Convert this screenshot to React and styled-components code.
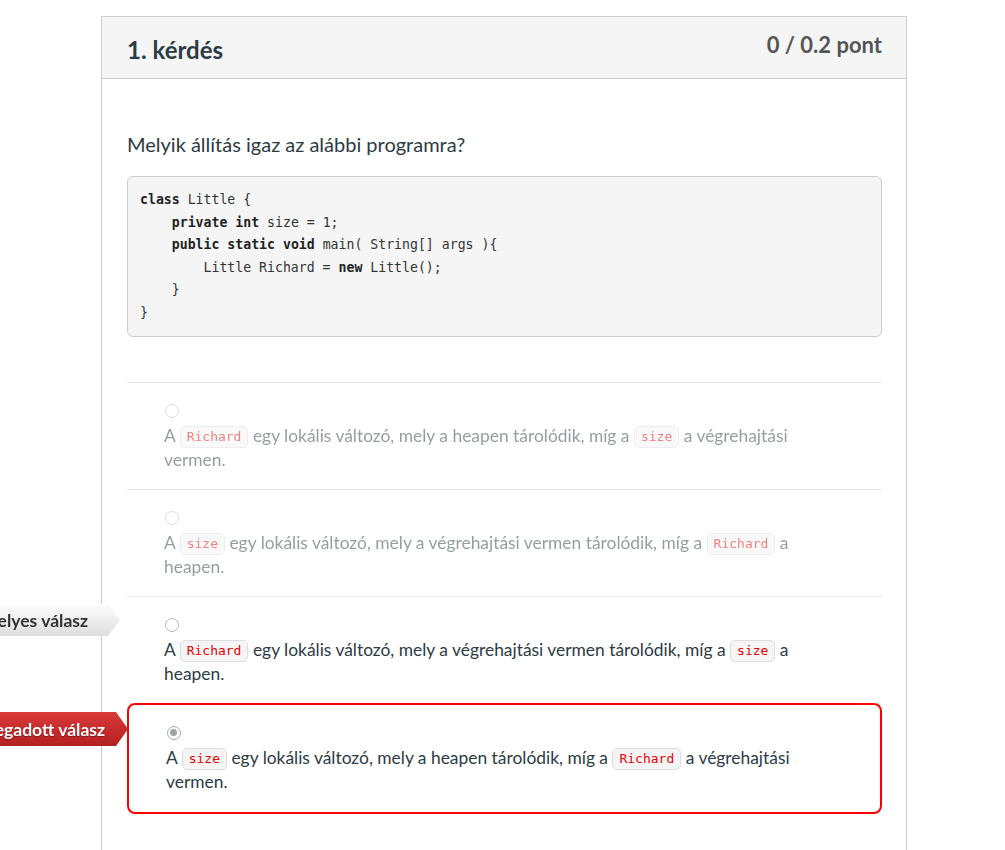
import React from "react";
import styled, { createGlobalStyle } from "styled-components";

const Global = createGlobalStyle`
  html, body { margin: 0; padding: 0; background: #fff; }
  body { font-family: Lato, "Open Sans", sans-serif; color: #2d3b45; overflow: hidden; }
`;

const Page = styled.div`
  padding: 16px 0 0 101px;
  height: 834px;
  overflow: hidden;
`;

const Card = styled.div`
  width: 804px;
  border: 1px solid #c7cdd1;
  border-bottom: none;
  min-height: 900px;
`;

const Header = styled.div`
  display: flex;
  justify-content: space-between;
  align-items: flex-start;
  height: 62px;
  box-sizing: border-box;
  padding: 15px 24px 0 25px;
  background: #f5f5f5;
  border-bottom: 1px solid #c7cdd1;
`;

const Title = styled.h2`
  margin: 3px 0 0;
  font-size: 24px;
  line-height: 30px;
  font-weight: 700;
  color: #2d3b45;
`;

const Points = styled.div`
  font-size: 22px;
  line-height: 26px;
  font-weight: 700;
  color: #555;
`;

const Body = styled.div`
  padding: 51px 24px 0 25px;
`;

const Question = styled.p`
  margin: 0 0 18px;
  font-size: 20px;
  line-height: 28px;
`;

const Code = styled.pre`
  margin: 0 0 45px;
  padding: 12px;
  background: #f5f5f5;
  border: 1px solid #ccc;
  border-radius: 6px;
  font-family: "DejaVu Sans Mono", "Liberation Mono", monospace;
  font-size: 13.2px;
  line-height: 22.5px;
  color: #333;
`;

const Kw = styled.b`
  font-weight: 700;
  color: #222;
`;

const Answers = styled.div`
  display: flex;
  flex-direction: column;
`;

const Answer = styled.div`
  position: relative;
  border-top: 1px solid #e8e8e8;
  padding: 21px 78px 17px 37px;
  display: flex;
  flex-direction: column;
  align-items: flex-start;
  gap: 6px;
  ${p =>
    p.$selected &&
    `
    border: 2px solid #f00;
    border-radius: 8px;
    padding: 21px 76px 18px 37px;
  `}
`;

const Faded = styled.div`
  opacity: ${p => (p.$dim ? 0.5 : 1)};
  display: flex;
  flex-direction: column;
  align-items: flex-start;
  gap: 6px;
`;

const Radio = styled.span`
  display: block;
  width: 14px;
  height: 14px;
  box-sizing: border-box;
  margin-left: 1px;
  border-radius: 50%;
  border: 1.5px solid ${p => (p.$checked ? "#a7acb0" : "#b5b9bd")};
  background: #fff;
  position: relative;
  &::after {
    content: "";
    display: ${p => (p.$checked ? "block" : "none")};
    position: absolute;
    left: 2px;
    top: 2px;
    width: 7px;
    height: 7px;
    border-radius: 50%;
    background: #a0a4a8;
  }
`;

const Text = styled.div`
  font-size: 17.4px;
  line-height: 24px;
  color: #2d3b45;
`;

const Chip = styled.code`
  display: inline-block;
  font-family: "DejaVu Sans Mono", "Liberation Mono", monospace;
  font-size: 13px;
  line-height: 20px;
  padding: 0 6px;
  color: #e80000;
  background: #f5f5f5;
  border: 1px solid #ddd;
  border-radius: 5px;
  vertical-align: 1px;
`;

const Label = styled.div`
  position: absolute;
  top: 7px;
  right: calc(100% + ${p => p.$gap}px);
  height: ${p => p.$h}px;
  display: flex;
  align-items: center;
  justify-content: flex-end;
  padding: 0 ${p => p.$pr}px 0 40px;
  white-space: nowrap;
  font-size: 17.5px;
  font-weight: 700;
  color: ${p => (p.$red ? "#fff" : "#333")};
  background: ${p =>
    p.$red
      ? "linear-gradient(#d93a3a, #b42020)"
      : "linear-gradient(#fdfdfd, #dedede)"};
  clip-path: polygon(0 0, calc(100% - 12px) 0, 100% 50%, calc(100% - 12px) 100%, 0 100%);
  text-shadow: ${p => (p.$red ? "0 1px 1px rgba(0,0,0,.35)" : "none")};
  filter: drop-shadow(0 0 0.5px #999);
`;

export default function App() {
  return (
    <>
      <Global />
      <Page>
        <Card>
          <Header>
            <Title>1. kérdés</Title>
            <Points>0 / 0.2 pont</Points>
          </Header>
          <Body>
            <Question>Melyik állítás igaz az alábbi programra?</Question>
            <Code>
              <Kw>class</Kw> Little {"{"}
              {"\n    "}<Kw>private</Kw> <Kw>int</Kw> size = 1;
              {"\n    "}<Kw>public</Kw> <Kw>static</Kw> <Kw>void</Kw> main( String[] args ){"{"}
              {"\n        "}Little Richard = <Kw>new</Kw> Little();
              {"\n    "}{"}"}
              {"\n"}{"}"}
            </Code>
            <Answers>
              <Answer>
                <Faded $dim>
                  <Radio />
                  <Text>
                    A <Chip>Richard</Chip> egy lokális változó, mely a heapen tárolódik, míg a <Chip>size</Chip> a végrehajtási vermen.
                  </Text>
                </Faded>
              </Answer>
              <Answer>
                <Faded $dim>
                  <Radio />
                  <Text>
                    A <Chip>size</Chip> egy lokális változó, mely a végrehajtási vermen tárolódik, míg a <Chip>Richard</Chip> a heapen.
                  </Text>
                </Faded>
              </Answer>
              <Answer>
                <Label $gap={7} $h={32} $pr={32}>Helyes válasz</Label>
                <Faded>
                  <Radio />
                  <Text>
                    A <Chip>Richard</Chip> egy lokális változó, mely a végrehajtási vermen tárolódik, míg a <Chip>size</Chip> a heapen.
                  </Text>
                </Faded>
              </Answer>
              <Answer $selected>
                <Label $red $gap={1} $h={34} $pr={23}>Megadott válasz</Label>
                <Faded>
                  <Radio $checked />
                  <Text>
                    A <Chip>size</Chip> egy lokális változó, mely a heapen tárolódik, míg a <Chip>Richard</Chip> a végrehajtási vermen.
                  </Text>
                </Faded>
              </Answer>
            </Answers>
          </Body>
        </Card>
      </Page>
    </>
  );
}
